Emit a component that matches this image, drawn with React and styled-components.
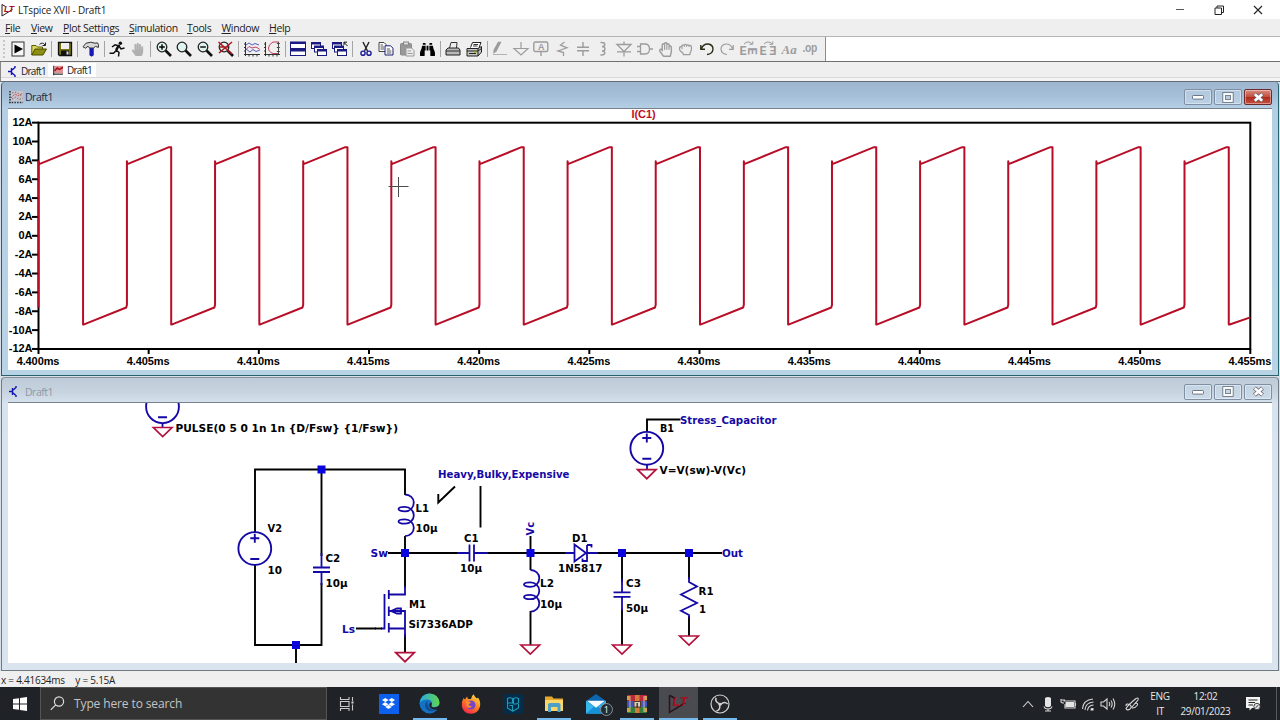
import React from "react";
import styled, { createGlobalStyle, css } from "styled-components";
import {
  FaBinoculars,
  FaDropbox,
  FaHandPaper,
  FaRegHandPaper,
  FaRegHandRock,
} from "react-icons/fa";

const INK = "#1509a6";
const TRACE = "#b80d26";
const GREY = "#9c9c9c";

/* ---------- toolbar icons, 16 x 16 ---------- */

const Lens = ({ children }) => (
  <>
    <path d="M9.5 9.5 L15 15" stroke="#111" strokeWidth="2.6" />
    <circle cx="6" cy="6" r="4.8" fill="#dff3f0" stroke="#222" strokeWidth="1.3" />
    {children}
  </>
);

const Axes = () => (
  <path
    d="M1.5 1V15M0 13.5H16M0 3H2M0 6.5H2M0 10H2M5 13V15.5M9 13V15.5M13 13V15.5"
    stroke="#333"
    fill="none"
    strokeWidth="1"
  />
);

const MiniWindow = ({ x, y, w = 9, h = 6 }) => (
  <>
    <rect x={x} y={y} width={w} height={h} fill="#fff" stroke="#1a1a80" />
    <rect x={x} y={y} width={w} height="2" fill="#1a1a80" />
  </>
);

const ICONS = {
  run: (
    <>
      <rect x="2" y="1" width="12" height="14" fill="#f6f6f6" stroke="#333" />
      <path d="M4.5 3.5L13 8L4.5 12.5Z" fill="#000" />
    </>
  ),
  open: (
    <>
      <path d="M.8 14V4.5H5L6.5 6H11.5V8" fill="#d8d860" stroke="#5a5a00" />
      <path d="M.8 14L4 8H15.5L12 14Z" fill="#8e8e12" stroke="#4c4c00" />
      <path d="M8.5 3.5Q11.5 .5 14 4M14.5 1.5V4.5H11.5" fill="none" stroke="#222" />
    </>
  ),
  save: (
    <>
      <path d="M1.5 1.5H14.5V14.5H2.5L1.5 13.5Z" fill="#74740a" stroke="#111" strokeWidth="1.3" />
      <rect x="4" y="2" width="8" height="6" fill="#efefef" />
      <rect x="4" y="9.5" width="8" height="5" fill="#111" />
      <rect x="9.5" y="10.5" width="2" height="3" fill="#ddd" />
    </>
  ),
  hammer: (
    <>
      <path d="M6.8 6.5H10.4V14.2Q8.6 16.2 6.8 14.2Z" fill="#1616c8" stroke="#10107c" strokeWidth=".6" />
      <path d="M0 5.8L3 2.2Q8 .2 12 2.2L14.5 1.8Q16 3.5 15.4 6.4L12.5 5.4L10.5 7H6.5L5 5.2L2.5 7.2Z" fill="#d8d8d8" stroke="#333" />
    </>
  ),
  runner: (
    <>
      <circle cx="11.4" cy="2.2" r="1.7" fill="#111" />
      <path d="M10.5 4.2L7.5 9.2L10 11.5L9.5 15.5M7.5 9.2L4.5 12.2H.5M3 6L6 3.8L10 5L12 8L15.5 7" fill="none" stroke="#111" strokeWidth="1.5" />
      <path d="M10 4L7 9" stroke="#111" strokeWidth="2.4" />
    </>
  ),
  zoomIn: (
    <Lens>
      <path d="M3.2 6H8.8M6 3.2V8.8" stroke="#000" strokeWidth="1.4" />
    </Lens>
  ),
  zoom: <Lens />,
  zoomOut: (
    <Lens>
      <path d="M3.2 6H8.8" stroke="#000" strokeWidth="1.4" />
    </Lens>
  ),
  zoomFit: (
    <Lens>
      <path d="M.5 1L14 13M14 1L1 12M1 6H10" stroke="#b01820" strokeWidth="1.6" />
    </Lens>
  ),
  traces: (
    <>
      <Axes />
      <path d="M2 4L5 2L8 4L11 2.5L15 4" fill="none" stroke="#555cb8" />
      <path d="M2 8.5L5 5.5L8 7L12 6L15.5 8" fill="none" stroke="#c04060" />
      <path d="M2 8L6 11L9 8.5L12 10.5L16 9" fill="none" stroke="#555cb8" />
    </>
  ),
  fitTrace: (
    <>
      <Axes />
      <path d="M15 1H9Q4.5 3.5 4.5 7Q4.5 11 9 12.5H14" fill="none" stroke="#c4405a" />
      <path d="M14.5 1V13M12.8 2.5H15.8M12.8 6.5H15.8M12.8 10.5H15.8" fill="none" stroke="#444" />
    </>
  ),
  tile: (
    <>
      <MiniWindow x={.5} y={1} w={15} h={6.5} />
      <MiniWindow x={.5} y={8.5} w={15} h={6} />
    </>
  ),
  cascade: (
    <>
      <MiniWindow x={.5} y={1.5} />
      <MiniWindow x={3.5} y={5} />
      <MiniWindow x={6.5} y={8.5} />
    </>
  ),
  closeAll: (
    <>
      <MiniWindow x={.5} y={1.5} />
      <MiniWindow x={2.5} y={5} />
      <MiniWindow x={5.5} y={8.5} />
      <path d="M15.5 5L12 1.5M12 4V1.2H15" fill="none" stroke="#111" />
    </>
  ),
  cut: (
    <>
      <path d="M5 1L9.5 10M11 1L6.5 10" stroke="#222" strokeWidth="1.4" />
      <circle cx="5" cy="12.2" r="2.1" fill="none" stroke="#1a1a98" strokeWidth="1.4" />
      <circle cx="11" cy="12.2" r="2.1" fill="none" stroke="#1a1a98" strokeWidth="1.4" />
    </>
  ),
  copy: (
    <>
      <path d="M1 1.5H6L8 3.5V10.5H1Z" fill="#fff" stroke="#444" />
      <path d="M2.5 4H5M2.5 6H6M2.5 8H6" stroke="#555" />
      <path d="M7 4.8H12.5L15 7.2V14H7Z" fill="#fff" stroke="#1c1c78" />
      <path d="M8.8 8H12M8.8 10H13.3M8.8 12H13.3" stroke="#555" />
    </>
  ),
  paste: (
    <>
      <rect x="1.5" y="2.5" width="11" height="11.5" rx="1" fill="#999" stroke="#888" />
      <rect x="4.5" y="1" width="5" height="3" fill="#ddd" stroke="#888" />
      <path d="M7 7H12.5L15 9.5V15H7Z" fill="#eee" stroke="#999" />
      <path d="M8.5 10H12M8.5 12.5H13.5" stroke="#999" />
    </>
  ),
  printer: (
    <>
      <path d="M4.5 7L6 1.5H12L11.5 7" fill="#eee" stroke="#333" />
      <path d="M3 7H13.5L15 9V14H1V9Z" fill="#b8b8b8" stroke="#222" />
      <path d="M1 10H15" stroke="#333" />
    </>
  ),
  printSetup: (
    <>
      <path d="M4.5 6.5L6.5 1.5H15L13 6.5" fill="#fff" stroke="#222" />
      <path d="M7.5 3.5H12M7 5H11.5" stroke="#333" />
      <path d="M1 7.5H12L15.5 5.5V11L12 15H1Z" fill="#c8c8c4" stroke="#222" />
      <path d="M1 10H12V15M12 7.5V10M12 10L15.5 7.5M3 12.5H10" fill="none" stroke="#222" />
      <path d="M8 11.3H11" stroke="#b7b72a" />
    </>
  ),
  pencil: (
    <>
      <path d="M6 .8H9.5L4.5 10.5L1.2 13L1.6 8.8Z" fill={GREY} />
      <path d="M1 13.5H15" stroke="#b4b4b4" />
    </>
  ),
  ground: <path d="M8 1V7.5M1 7.5H15L8 14Z" fill="none" stroke={GREY} strokeWidth="1.2" />,
  label: (
    <>
      <rect x=".8" y="1" width="14" height="9.5" rx="1.5" fill="none" stroke={GREY} strokeWidth="1.4" />
      <path d="M8 10.5V15" stroke={GREY} strokeWidth="1.4" />
      <text x="8" y="9" textAnchor="middle" fill={GREY} fontSize="9" fontWeight="700" fontFamily="Liberation Sans">A</text>
    </>
  ),
  resistor: <path d="M10.5 1L6.5 4L13 6.8L4 10L9.5 11.5V15" fill="none" stroke={GREY} strokeWidth="1.3" />,
  capacitor: <path d="M8 1V6.3M2 6.3H14M2 9.8H14M8 9.8V15" fill="none" stroke={GREY} strokeWidth="1.4" />,
  inductor: <path d="M5.5 1.5C11 1 11 5.5 7 5.5C11 5.5 11 10 7 10C11 10 11 14.5 5.5 14" fill="none" stroke={GREY} strokeWidth="1.4" />,
  diode: <path d="M8 .5V3.5M1 3.5H15L8 10.5ZM1 10.8H15M8 11V15.5" fill="none" stroke={GREY} strokeWidth="1.3" />,
  gate: <path d="M3.5 3H8Q12.5 3 12.5 8Q12.5 13 8 13H3.5ZM0 5.5H3.5M0 10.5H3.5M12.5 8H16" fill="none" stroke={GREY} strokeWidth="1.3" />,
  undo: <path d="M2.5 7.5Q4.5 2.8 9 3Q14 3.6 14 8.2Q13.6 12.8 8 13.5M1.8 4V8.3H6" fill="none" stroke="#2c2c14" strokeWidth="1.4" />,
  redo: <path d="M13.5 7.5Q11.5 2.8 7 3Q2 3.6 2 8.2Q2.4 12.8 8 13.5M14.2 4V8.3H10" fill="none" stroke={GREY} strokeWidth="1.2" />,
  rotate: (
    <>
      <text x="-.5" y="14" fill={GREY} fontSize="12" fontWeight="700" fontFamily="Liberation Mono">E</text>
      <text transform="translate(8 6.5) rotate(90)" x="0" y="0" fill={GREY} fontSize="12.5" fontWeight="700" fontFamily="Liberation Mono">E</text>
      <path d="M4 3Q8 -1 12 2.8M12.8 .3V3.3H9.5" fill="none" stroke={GREY} />
    </>
  ),
  mirror: (
    <>
      <text x="-.5" y="14" fill={GREY} fontSize="12" fontWeight="700" fontFamily="Liberation Mono">E</text>
      <text transform="translate(16.5 14) scale(-1 1)" fill={GREY} fontSize="12" fontWeight="700" fontFamily="Liberation Mono">E</text>
      <path d="M4 3Q8 -1 12 2.8M12.8 .3V3.3H9.5" fill="none" stroke={GREY} />
    </>
  ),
  text: <text x=".5" y="12.5" textLength="15" fill={GREY} fontSize="13" fontWeight="700" fontStyle="italic" fontFamily="Liberation Serif">Aa</text>,
  op: <text x=".5" y="11" textLength="14.5" lengthAdjust="spacingAndGlyphs" fill={GREY} fontSize="12" fontWeight="700" fontFamily="Liberation Sans">.op</text>,
};

const FONT_ICONS = {
  halt: <FaHandPaper size={13} color="#b0b0b0" />,
  find: <FaBinoculars size={15} color="#000" />,
  move: <FaRegHandPaper size={15} color={GREY} />,
  drag: <FaRegHandRock size={13} color={GREY} />,
};

const TOOLBAR = [
  ["run", "open"],
  ["save"],
  ["hammer"],
  ["runner", "halt"],
  ["zoomIn", "zoom", "zoomOut", "zoomFit"],
  ["traces", "fitTrace"],
  ["tile", "cascade", "closeAll"],
  ["cut", "copy", "paste", "find"],
  ["printer", "printSetup"],
  [
    "pencil", "ground", "label", "resistor", "capacitor", "inductor", "diode", "gate",
    "move", "drag", "undo", "redo", "rotate", "mirror", "text", "op",
  ],
];

const ToolIcon = ({ name }) => (
  <ToolButton>
    {FONT_ICONS[name] || (
      <svg width="16" height="16" viewBox="0 0 16 16" overflow="visible">
        {ICONS[name]}
      </svg>
    )}
  </ToolButton>
);

const Toolbar = () => (
  <ToolbarRow>
    <Tools>
      <Grip />
      {TOOLBAR.map((group, i) => (
        <React.Fragment key={i}>
          {i > 0 && <Separator />}
          {group.map((name) => (
            <ToolIcon key={name} name={name} />
          ))}
        </React.Fragment>
      ))}
    </Tools>
  </ToolbarRow>
);

/* ---------- logos ---------- */

const LtLogo = ({ size = 14 }) => (
  <svg width={size} height={size} viewBox="0 0 14 14" overflow="visible">
    <path d="M1 1.5V13L11.5 6.5M1 1.5L4.5 3.5" fill="none" stroke="#2a1418" strokeWidth="1" />
    <text x="3" y="8.6" textLength="10" lengthAdjust="spacingAndGlyphs" fontSize="9" letterSpacing="0" fontWeight="700" fontStyle="italic" fill="#a80d22" fontFamily="Liberation Sans">LT</text>
  </svg>
);

const SchematicIcon = () => (
  <svg width="9" height="11" viewBox="0 0 9 11">
    <path d="M0 5.5H3M3.5 2V9M3.5 4.5L7 1.5V0M3.5 6.5L7 9.5V11" fill="none" stroke="#1414b4" strokeWidth="1.4" />
  </svg>
);

const PlotIcon = ({ faded }) => (
  <svg width={faded ? 14 : 10} height={faded ? 13 : 11} viewBox="0 0 14 13">
    <rect x="2" y="0" width="12" height="10" fill={faded ? "#c9c4cc" : "#e09090"} />
    <path d="M1 0V13M0 11.5H14" stroke="#333" strokeWidth="1.6" strokeDasharray={faded ? "1.5 1.2" : "none"} />
    <path d="M2 7L6 3L9 5L14 2" fill="none" stroke={faded ? "#c4534f" : "#a81020"} strokeWidth={faded ? 1 : 2.2} strokeDasharray={faded ? "2 1" : "none"} />
    {faded && <path d="M3 2L6 1L9 2.5L13 5M3 8L7 6L10 8.5L14 7" fill="none" stroke="#7b6a72" strokeDasharray="1.5 1.5" />}
  </svg>
);

/* ---------- waveform ---------- */

const PLOT = { left: 38.5, right: 1250.3, top: 122.7, bottom: 349 };
const usToX = (us) => PLOT.left + 0.3 + (us * (PLOT.right - PLOT.left)) / 55;
const ampToY = (a) => 235.8 - a * 9.43;

const wavePath = () => {
  let d = `M${PLOT.left} ${ampToY(-7.6)}`;
  for (let us = 0; us < 55; us += 4) {
    const up = usToX(us);
    const down = usToX(us + 2);
    d += `V${ampToY(7.9)}L${up + 0.4} ${ampToY(7.6)}`;
    d += `L${down - 2} ${ampToY(9.4)}L${down + 0.2} ${ampToY(9.4)}V${ampToY(-9.4)}h1`;
    const next = us + 4;
    if (next > 55) {
      d += `L${PLOT.right} ${ampToY(-8.65)}`;
    } else {
      d += `L${usToX(next) - 0.7} ${ampToY(-7.6)}L${usToX(next)} ${ampToY(-7.3)}`;
    }
  }
  return d;
};

const AMPS = [12, 10, 8, 6, 4, 2, 0, -2, -4, -6, -8, -10, -12];
const TIMES = [0, 5, 10, 15, 20, 25, 30, 35, 40, 45, 50, 55];

const Waveform = () => (
  <Canvas viewBox="8 109 1264 261" height="261">
    <AxisText x="643.5" y="118" textAnchor="middle" fill="#bd1027">I(C1)</AxisText>
    <rect x={PLOT.left} y={PLOT.top} width={PLOT.right - PLOT.left} height={PLOT.bottom - PLOT.top} fill="none" stroke="#000" strokeWidth="2" />
    {AMPS.map((a) => (
      <g key={a}>
        <path d={`M32 ${ampToY(a)}H39`} stroke="#000" strokeWidth="2" />
        <AxisText x="32.3" y={ampToY(a) + 3.5} textAnchor="end">{a}A</AxisText>
      </g>
    ))}
    {TIMES.map((t) => (
      <g key={t}>
        <path d={`M${usToX(t) - 0.3} 349V354`} stroke="#000" strokeWidth="2" />
        <AxisText x={usToX(t) - 0.8} y="364.5" textAnchor="middle">{(4.4 + t / 1000).toFixed(3)}ms</AxisText>
      </g>
    ))}
    <path d={wavePath()} fill="none" stroke={TRACE} strokeWidth="2" strokeLinejoin="round" />
    <path d="M388.5 186.5H408.5M398.5 177V197" stroke="#4c4c4c" strokeWidth="1" />
  </Canvas>
);

/* ---------- schematic ---------- */

const Ground = ({ x, y }) => (
  <path d={`M${x - 9.3} ${y}H${x + 9.3}L${x} ${y + 9}Z`} fill="#fff" stroke="#b3123d" strokeWidth="1.7" />
);

const Source = ({ x, y }) => (
  <g stroke={INK} strokeWidth="1.9" fill="none">
    <circle cx={x} cy={y} r="16.4" />
    <path d={`M${x - 4.5} ${y - 10.3}h9M${x} ${y - 14.8}v9M${x - 4.5} ${y + 10.5}h9`} />
  </g>
);

const Coil = ({ x, y }) => (
  <path
    transform={`translate(${x} ${y})`}
    d="M0 0C5 0 8.8 3.5 8.8 8C8.8 13 5 16.8 0 16.8C-4 16.8-6.5 16-6.5 14.6C-6.5 13-4 12.4 0 12.4C5 12.4 8.8 16.3 8.8 20.7C8.8 25.5 5 29.2 0 29.2C-4 29.2-6.5 28.4-6.5 27C-6.5 25.4-4 24.8 0 24.8C5 24.8 8.8 29 8.8 33.3C8.8 37.8 5 41.7 0 41.7"
    fill="none"
    stroke={INK}
    strokeWidth="1.8"
  />
);

const LABELS = [
  ["PULSE(0 5 0 1n 1n {D/Fsw} {1/Fsw})", 175.5, 432, 222.5],
  ["V2", 267.5, 532, 14.5],
  ["10", 267.5, 574, 14.5],
  ["C2", 325.5, 561.5, 14.8],
  ["10µ", 325.5, 587, 22],
  ["L1", 415.5, 511.5, 13.5],
  ["10µ", 415.5, 532, 22],
  ["C1", 464, 541.5, 14.5],
  ["10µ", 460, 572, 22],
  ["L2", 540, 587, 14],
  ["10µ", 540, 607.5, 22],
  ["D1", 572, 541.5, 15.5],
  ["1N5817", 558, 572, 44.5],
  ["C3", 626, 587, 15],
  ["50µ", 626, 611.5, 22],
  ["R1", 698.5, 594.5, 15],
  ["1", 699, 613, 7],
  ["M1", 409, 607.5, 17],
  ["Si7336ADP", 408.5, 628, 64.5],
  ["B1", 660, 432, 14],
  ["V=V(sw)-V(Vc)", 659.5, 474, 86.5],
  ["Sw", 370.5, 557, 17.5, INK],
  ["Ls", 342, 632.5, 13, INK],
  ["Out", 722, 557, 21, INK],
  ["Stress_Capacitor", 680, 424, 96.5, INK],
  ["Heavy,Bulky,Expensive", 438, 478, 131.5, INK],
];

const NODES = [
  [321.5, 469.5],
  [296, 645],
  [405, 553],
  [530.5, 553],
  [622, 553],
  [689, 553],
];

const Schematic = () => (
  <Canvas viewBox="8 403 1264 260" height="260">
    <path
      d="M255 532V469.5H405V495M255 565V645H321.5V583M321.5 469.5V556M296 645V663M388 553H460M485 553H566M595 553H722M405 536V588M405 634V652M356 628.5H376M530.5 536V570M530.5 611V645M622 553V582M622 609V645M689 553V579M689 616V636M647 432V419.5H680.5M455 486.5L438.3 502.5V494M480.5 486V527.5"
      fill="none"
      stroke="#000"
      strokeWidth="1.9"
    />
    <path
      d="M321.5 553V567.5M313 567.5H330M313 572H330M321.5 572V585M457 553H469.5M469.5 544.5V561.5M474 544.5V561.5M474 553H488M622 579V592.3M613.5 592.3H630.5M613.5 596.8H630.5M622 596.8V611M689 577V582L697 586.5L681 594.5L697 603L681 610.8L689 615V618M565 553H574M574.5 544.5V561.5L586 553ZM587 545V561H582.5V558.5M587 545H591.5V547.5M587 553H598M384.5 594V628.5H381M388.8 590V599M388.8 606.5V616M388.8 623V632.5M388.8 594.5H405V586M388.8 611H405V637M388.8 628.5H405M391 611L397 608.5H401V613.5H397ZM162.5 423V428M647 464V470"
      fill="none"
      stroke={INK}
      strokeWidth="1.8"
    />
    <path d="M375 628.5H382" stroke="#000" strokeWidth="1.9" />
    <Source x={162.5} y={406.7} />
    <Source x={254.8} y={548.5} />
    <Source x={646.8} y={448.3} />
    <Coil x={405} y={494.5} />
    <Coil x={530.5} y={570} />
    <Ground x={162.7} y={427.5} />
    <Ground x={405} y={652.7} />
    <Ground x={530.3} y={645} />
    <Ground x={622} y={645} />
    <Ground x={689} y={636} />
    <Ground x={646.8} y={469.7} />
    {NODES.map(([x, y]) => (
      <rect key={x} x={x - 4} y={y - 4} width="8" height="8" fill="#0a05dc" />
    ))}
    {LABELS.map(([label, x, y, width, fill]) => (
      <PartText key={`${label}${x}`} x={x} y={y} textLength={width} lengthAdjust="spacingAndGlyphs" fill={fill || "#000"}>
        {label}
      </PartText>
    ))}
    <PartText transform="translate(534 535.5) rotate(-90)" textLength="13.5" lengthAdjust="spacingAndGlyphs" fill={INK}>Vc</PartText>
  </Canvas>
);

/* ---------- windows ---------- */

const ChildWindow = ({ active, icon, children }) => (
  <WindowFrame $active={active}>
    <WindowTitle $active={active}>
      <WindowIcon>{icon}</WindowIcon>
      <WindowName $active={active}>Draft1</WindowName>
      <WindowButton>
        <svg width="14" height="8" viewBox="0 0 14 8">
          <rect x="1.5" y="2.5" width="11" height="3.6" rx=".8" fill="#fff" stroke="#6d7783" strokeWidth="1" />
        </svg>
      </WindowButton>
      <WindowButton>
        <svg width="12" height="11" viewBox="0 0 12 11">
          <rect x="2.2" y="2" width="7.6" height="7" fill="none" stroke="#66707c" strokeWidth="3.6" />
          <rect x="2.2" y="2" width="7.6" height="7" fill="none" stroke="#fff" strokeWidth="1.9" />
        </svg>
      </WindowButton>
      <WindowButton $close={active}>
        <svg width="13" height="11" viewBox="0 0 13 11">
          <path d="M2.5 2L10.5 9M10.5 2L2.5 9" stroke="#66606a" strokeWidth="4.2" />
          <path d="M2.8 2.2L10.2 8.8M10.2 2.2L2.8 8.8" stroke="#fff" strokeWidth="2.7" />
        </svg>
      </WindowButton>
    </WindowTitle>
    <WindowBody>{children}</WindowBody>
  </WindowFrame>
);

const MENU = [
  ["File", 26],
  ["View", 32],
  ["Plot Settings", 66],
  ["Simulation", 58],
  ["Tools", 34.5],
  ["Window", 47.5],
  ["Help", 30],
];

/* ---------- taskbar ---------- */

const EdgeLogo = () => (
  <svg width="21" height="21" viewBox="0 0 21 21">
    <defs>
      <linearGradient id="edgeTop" x1="0" x2="1">
        <stop offset="0" stopColor="#25a8e0" />
        <stop offset="1" stopColor="#62d64c" />
      </linearGradient>
    </defs>
    <circle cx="10.5" cy="10.5" r="10" fill="#1272c4" />
    <path d="M.6 10Q2 .8 10.5 .5Q19.5 1 20.5 9.5Q20.3 14.3 14.5 14Q11.5 13.6 13 11.5Q13.6 7 8.5 6.5Q3 6.4 .6 10Z" fill="url(#edgeTop)" />
    <path d="M8.5 8Q4.5 11.5 7 15.5Q10.5 20.5 18 16.5Q13 18.5 10 14.8Q7.5 11.5 8.5 8Z" fill="#174a91" />
    <path d="M12.5 12Q11.5 14.2 15 14.6Q18 14.5 19.8 12.5L20.5 16L18.5 16.5Q13 17.5 10.5 13.5Q9.5 11 12 9.5Q13.5 10.5 12.5 12Z" fill="#1f2226" />
  </svg>
);

const FirefoxLogo = () => (
  <svg width="20" height="20" viewBox="0 0 20 20">
    <defs>
      <linearGradient id="fox" x1=".8" y1="0" x2=".2" y2="1">
        <stop offset="0" stopColor="#ffdf3a" />
        <stop offset=".5" stopColor="#ff7a24" />
        <stop offset="1" stopColor="#f5204f" />
      </linearGradient>
    </defs>
    <path d="M2.5 4L4 5.5L6 2.5L7 5H10Q10.5 2 12.5 .3Q14 3.5 16 4.5L17 3.5Q20 8 19 12.5Q17 19.5 10 19.8Q2 19.5 .8 12Q.5 7.5 2.5 4Z" fill="url(#fox)" />
    <circle cx="10" cy="11" r="4.5" fill="#7445c7" />
    <path d="M5 7.5Q8 6.5 10 8.5L7.5 10.5Q8 12.5 11 12.3Q8 15.5 5.5 12.5Z" fill="#ff8a2a" />
  </svg>
);

const FootballLogo = () => (
  <svg width="20" height="20" viewBox="0 0 20 20">
    <rect width="20" height="20" fill="#062c48" />
    <path d="M4.5 4.5Q7 3 9.5 4.5V9H4.5ZM10.5 4.5Q13 3 15.5 4.5V9L13 10H10.5ZM4.5 9.5V14L9.5 17V11.5H6.5M15.5 10V14L10 17" fill="none" stroke="#1b9ebd" strokeWidth="1.1" />
  </svg>
);

const FolderLogo = () => (
  <svg width="20" height="18" viewBox="0 0 20 18">
    <path d="M1 1.5H8L9.5 3.5H19V16H1Z" fill="#e6a92e" />
    <path d="M1 5H19V16H1Z" fill="#fbd669" />
    <path d="M4 17V9.5Q4 8 6 8H14.5Q16.5 8 16.5 9.5V17H13.5V12H7V17Z" fill="#4ba0c8" />
  </svg>
);

const MailLogo = () => (
  <MailWrap>
    <svg width="20" height="20" viewBox="0 0 20 20">
      <path d="M0 7L10 0L20 7V19.5H0Z" fill="#0c65ad" />
      <path d="M0 6.5L10 14L20 6.5V19.5H0Z" fill="#37b8ed" />
      <path d="M0 19.5L10 11L20 19.5Z" fill="#1591d5" />
      <path d="M1 6.8H19L10 13.7Z" fill="#f2fbff" />
    </svg>
    <Badge>1</Badge>
  </MailWrap>
);

const RarLogo = () => (
  <svg width="20" height="18" viewBox="0 0 20 18">
    <rect y="0" width="20" height="6" rx="1" fill="#b92b3a" />
    <rect y="6" width="20" height="6" rx="1" fill="#4655bb" />
    <rect y="12" width="20" height="6" rx="1" fill="#347f39" />
    <path d="M0 1H2.5V5H0ZM17.5 1H20V5H17.5ZM0 13H2.5V17H0ZM17.5 13H20V17H17.5Z" fill="#d3a34c" />
    <path d="M3 1V17M17 1V17" stroke="#e6d2a0" strokeWidth=".8" />
    <rect x="8" width="4.5" height="18" fill="#d27b3b" />
    <rect x="7" y="6.5" width="6.5" height="5.5" fill="#d8d0bf" stroke="#513a2d" />
    <path d="M10.2 8V13" stroke="#533" strokeWidth="1.5" />
  </svg>
);

const ObsLogo = () => (
  <svg width="20" height="20" viewBox="0 0 20 20">
    <circle cx="10" cy="10" r="9" fill="#24252a" stroke="#d0d0d0" strokeWidth="1.2" />
    <g fill="none" stroke="#d0d0d0" strokeWidth="1.5">
      <path d="M6 3.8Q4.8 8.2 9.6 9.6" />
      <path d="M6 3.8Q4.8 8.2 9.6 9.6" transform="rotate(120 10 10.3)" />
      <path d="M6 3.8Q4.8 8.2 9.6 9.6" transform="rotate(240 10 10.3)" />
    </g>
    <circle cx="10" cy="10.3" r="1.6" fill="#d0d0d0" />
  </svg>
);

const TaskViewIcon = () => (
  <svg width="16" height="16" viewBox="0 0 16 16">
    <path d="M1.5 1V3.5H10V1M1.5 15V12.5H10V15M1.5 5.5H10V10.5H1.5ZM13.5 1V5M13.5 8.5V14.5" fill="none" stroke="#c8c8c8" strokeWidth="1.1" />
    <rect x="12.5" y="5.5" width="2" height="2" fill="#ddd" />
  </svg>
);

const DropboxTile = () => (
  <BlueTile>
    <FaDropbox size={13} color="#fff" />
  </BlueTile>
);

const TASKS = [
  { icon: <TaskViewIcon /> },
  { icon: <DropboxTile /> },
  { icon: <EdgeLogo />, open: true },
  { icon: <FirefoxLogo /> },
  { icon: <FootballLogo /> },
  { icon: <FolderLogo />, open: true },
  { icon: <MailLogo /> },
  { icon: <RarLogo />, open: true },
  { icon: <LtLogo size={21} />, open: true, current: true },
  { icon: <ObsLogo />, open: true },
];

const TRAY = [
  { w: 20, d: "M3 11L8 5.5L13 11" },
  { w: 19, d: "M4 10.5Q4.5 13 8 13Q11.5 13 12 10.5M8 13V15M5 15H11", fill: "M5 2Q8 0 11 2V10Q8 12.5 5 10Z" },
  { w: 21, d: "M3.5 5H15V12H5V8M1 3V5.5Q1 7 4 7M.5 4H5M16 7V10", fill: "M5.5 6H14V11H5.5Z" },
  { w: 20, d: "M2.5 13Q3 4 13 3M5 14Q5.5 6.5 13.5 6M7.5 14.5Q8 9.5 13.5 9", fill: "M10.5 14.5L10.8 12.2L13.5 12V14.5Z" },
  { w: 20, d: "M1 6H3.5L7 3V13L3.5 10H1ZM9 6Q10.5 8 9 10M11 4.5Q13.3 8 11 11.5M13 2.5Q16.5 8 13 13.5" },
  { w: 28, d: "M2 10Q2 7 5.5 8.5Q8.5 10.5 6 13Q3 15 2 12.5Q4 9 12 2.5Q15 1 14 4L7.5 11.5M10 8Q14 6 13.5 9Q11 12.5 8 12" },
];

const Taskbar = () => (
  <TaskbarRow>
    <Start>
      <svg width="14" height="14" viewBox="0 0 14 14">
        <path d="M0 2L6 1.2V6.5H0ZM7 1L14 0V6.5H7ZM0 7.5H6V12.8L0 12ZM7 7.5H14V14L7 13Z" fill="#fff" />
      </svg>
    </Start>
    <Search>
      <svg width="15" height="15" viewBox="0 0 15 15">
        <circle cx="9" cy="5.5" r="4.6" fill="none" stroke="#ddd" strokeWidth="1.2" />
        <path d="M5.7 8.8L.8 13.8" stroke="#ddd" strokeWidth="1.2" />
      </svg>
      <SearchText>Type here to search</SearchText>
    </Search>
    {TASKS.map((task, i) => (
      <Task key={i} $open={task.open} $current={task.current}>
        {task.icon}
      </Task>
    ))}
    <Tray>
      {TRAY.map((item, i) => (
        <TrayIcon key={i} $width={item.w}>
          <svg width="16" height="16" viewBox="0 0 16 16">
            <path d={item.d} fill="none" stroke="#d6d6d6" strokeWidth="1.1" />
            {item.fill && <path d={item.fill} fill="#e4e4e4" />}
          </svg>
        </TrayIcon>
      ))}
      <TrayText $width={28}>
        <span>ENG</span>
        <span>IT</span>
      </TrayText>
      <TrayText $width={63}>
        <span>12:02</span>
        <span>29/01/2023</span>
      </TrayText>
      <Notifications>
        <svg width="15" height="15" viewBox="0 0 15 15">
          <path d="M0 1H14V12H6L3.5 14.5V12H0Z" fill="#f4f4f4" />
          <path d="M2.5 4H11.5M2.5 6.5H9M2.5 9H7" stroke="#222" />
          <circle cx="11" cy="10.5" r="3.2" fill="#ddd" stroke="#333" strokeWidth=".9" />
          <path d="M9.5 11.8L12.5 9" stroke="#333" />
        </svg>
      </Notifications>
    </Tray>
  </TaskbarRow>
);

export default function App() {
  return (
    <Screen>
      <GlobalStyle />
      <TitleBar>
        <LtLogo />
        <TitleText>LTspice XVII - Draft1</TitleText>
        <Controls width="90" height="12" viewBox="0 0 90 12">
          <path d="M1 5.5H9" stroke="#555" />
          <path d="M40 4H46.5V10.5H40ZM42 4V2H48.5V8.5H46.5" fill="none" stroke="#222" />
          <path d="M79 2L87 10M87 2L79 10" stroke="#222" strokeWidth="1.1" />
        </Controls>
      </TitleBar>
      <MenuBar>
        {MENU.map(([name, width]) => (
          <MenuItem key={name} $width={width}>
            <u>{name[0]}</u>
            {name.slice(1)}
          </MenuItem>
        ))}
      </MenuBar>
      <Toolbar />
      <Tabs>
        <Tab>
          <SchematicIcon />
          Draft1
        </Tab>
        <Tab $active>
          <PlotIcon />
          Draft1
        </Tab>
      </Tabs>
      <Workspace>
        <ChildWindow active icon={<PlotIcon faded />}>
          <Waveform />
        </ChildWindow>
        <ChildWindow icon={<SchematicIcon />}>
          <Schematic />
        </ChildWindow>
      </Workspace>
      <StatusBar>
        <span>x = 4.41634ms</span>
        <span>y = 5.15A</span>
      </StatusBar>
      <Taskbar />
    </Screen>
  );
}

const GlobalStyle = createGlobalStyle`
  * {
    box-sizing: border-box;
  }
  body {
    margin: 0;
    overflow: hidden;
  }
`;
const Screen = styled.div`
  display: flex;
  flex-direction: column;
  width: 1280px;
  height: 720px;
  background: #efefef;
  font-family: "Open Sans", "Noto Sans", sans-serif;
  font-size: 10.5px;
  letter-spacing: -0.35px;
  color: #222;
  white-space: nowrap;

  svg {
    display: block;
    flex-shrink: 0;
  }
`;
const TitleBar = styled.div`
  display: flex;
  align-items: center;
  height: 19px;
  padding: 0 15px 0 1px;
  background: #fff;
`;
const TitleText = styled.span`
  margin-left: 3px;
  font-size: 10px;
  letter-spacing: -0.2px;
`;
const Controls = styled.svg`
  margin-left: auto;
`;
const MenuBar = styled.div`
  display: flex;
  align-items: center;
  height: 18px;
  padding-left: 5px;
  border-bottom: 1px solid #b5b5b5;
`;
const MenuItem = styled.span`
  width: ${(props) => props.$width}px;
  u {
    text-underline-offset: 1px;
  }
`;
const ToolbarRow = styled.div`
  height: 25px;
  background: #fff;
  border-bottom: 1px solid #707070;
`;
const Tools = styled.div`
  display: flex;
  align-items: center;
  width: 826px;
  height: 24px;
  background: #efefef;
  border-right: 1px solid #8c8c8c;
`;
const Grip = styled.div`
  width: 2px;
  height: 18px;
  margin: 0 3px 0 3px;
  border-left: 2px dotted #c8c8c8;
`;
const ToolButton = styled.div`
  display: flex;
  align-items: center;
  justify-content: center;
  flex-shrink: 0;
  width: 20.65px;
  height: 20px;
`;
const Separator = styled.div`
  flex-shrink: 0;
  width: 1px;
  height: 16px;
  margin: 0 2.2px;
  background: #a5a5a5;
`;
const Tabs = styled.div`
  display: flex;
  height: 20px;
  padding: 1px 0 0 1px;
  border-left: 1px solid #888;
  border-bottom: 1px solid #626d78;
  background: linear-gradient(#efefef 15px, #d8d8d8 15px, #d8d8d8 16px, #f4f4f4 16px);
`;
const Tab = styled.div`
  display: flex;
  align-items: center;
  gap: 4px;
  height: ${(props) => (props.$active ? 14 : 16)}px;
  width: ${(props) => (props.$active ? 48 : 46)}px;
  padding-left: ${(props) => (props.$active ? 5 : 6)}px;
  font-size: 10px;
  letter-spacing: -0.75px;
  background: ${(props) => (props.$active ? "#fff" : "transparent")};
`;
const Workspace = styled.div`
  display: flex;
  flex-direction: column;
  gap: 1px;
  height: 589px;
  padding: 0 1px;
  background: #d8dfe6;
`;
const WindowFrame = styled.div`
  display: flex;
  flex-direction: column;
  height: 294px;
  padding: 0 6px ${(props) => (props.$active ? 5 : 7)}px;
  border: 1px solid ${(props) => (props.$active ? "#28636c" : "#6f7a84")};
  border-top: ${(props) => (props.$active ? "none" : "1px solid #87919b")};
  border-radius: 4px 4px 0 0;
  background: ${(props) =>
    props.$active
      ? "linear-gradient(#9db5cf, #a6bfd8 14px, #b4cfe5 26px, #b9d3e6)"
      : "linear-gradient(#bdcad7, #c7d4e0 14px, #d7e3ee 26px, #d9e4ef)"};
`;
const WindowTitle = styled.div`
  display: flex;
  align-items: center;
  gap: 2px;
  height: ${(props) => (props.$active ? 26 : 24)}px;
  padding: ${(props) => (props.$active ? 4 : 3)}px 0 0 1px;
  flex-shrink: 0;
`;
const WindowIcon = styled.div`
  width: 14px;
`;
const WindowName = styled.span`
  margin-right: auto;
  font-size: 10.5px;
  letter-spacing: -0.5px;
  color: ${(props) => (props.$active ? "#1c2b3c" : "#8b97a5")};
`;
const WindowButton = styled.div`
  display: flex;
  align-items: center;
  justify-content: center;
  width: 28px;
  height: 16px;
  border: 1px solid #7f8fa3;
  border-radius: 2px;
  background: rgba(200, 218, 236, 0.45);
  box-shadow: inset 0 0 0 1px rgba(255, 255, 255, 0.4);
  ${(props) =>
    props.$close &&
    css`
      border-color: #6b2a2a;
      background: linear-gradient(#d98c80, #c3503f 48%, #ad2a1c 50%, #c8503c);
    `}
`;
const WindowBody = styled.div`
  flex: 1;
  min-height: 0;
  border-top: 1px solid #77818c;
  background: #fff;
  overflow: hidden;
`;
const Canvas = styled.svg`
  width: 1264px;
`;
const AxisText = styled.text`
  font: 700 11px "Liberation Sans", Arial, sans-serif;
  letter-spacing: -0.1px;
`;
const PartText = styled.text`
  font: 700 10.8px "DejaVu Sans", Verdana, sans-serif;
  letter-spacing: 0;
`;
const StatusBar = styled.div`
  display: flex;
  align-items: center;
  gap: 10.5px;
  height: 16px;
  padding: 2px 0 0 1px;
  font-size: 10px;
  letter-spacing: -0.25px;
`;
const TaskbarRow = styled.div`
  display: flex;
  height: 33px;
  background: #1f2226;
`;
const Start = styled.div`
  display: flex;
  align-items: center;
  width: 40px;
  padding-left: 13px;
`;
const Search = styled.div`
  display: flex;
  align-items: center;
  gap: 9px;
  width: 286.5px;
  padding-left: 9px;
  border: 1px solid #555;
  background: #333;
`;
const SearchText = styled.span`
  font-size: 12px;
  color: #c4c4c4;
  letter-spacing: -0.12px;
`;
const Task = styled.div`
  display: flex;
  align-items: center;
  justify-content: center;
  width: 41.4px;
  flex-shrink: 0;
  background: ${(props) =>
    props.$current
      ? "linear-gradient(#76b9ed, #76b9ed) bottom / 39px 2px no-repeat, linear-gradient(#4a4b50, #4a4b50) center / 39px 100% no-repeat"
      : props.$open
        ? "linear-gradient(#76b9ed, #76b9ed) bottom / 34px 2px no-repeat"
        : "none"};
`;
const BlueTile = styled.div`
  display: flex;
  align-items: center;
  justify-content: center;
  width: 20px;
  height: 20px;
  background: #0d60ee;
`;
const MailWrap = styled.div`
  position: relative;
`;
const Badge = styled.span`
  position: absolute;
  left: 14px;
  top: 9px;
  width: 13px;
  height: 13px;
  border: 1px solid #8a8d90;
  border-radius: 50%;
  background: #222d35;
  color: #fff;
  font-size: 9px;
  line-height: 11px;
  text-align: center;
`;
const Tray = styled.div`
  display: flex;
  align-items: center;
  margin-left: auto;
  padding-right: 3px;
`;
const TrayIcon = styled.div`
  display: flex;
  justify-content: center;
  width: ${(props) => props.$width}px;
`;
const TrayText = styled.div`
  display: flex;
  flex-direction: column;
  align-items: center;
  width: ${(props) => props.$width}px;
  font-size: 10px;
  line-height: 15px;
  letter-spacing: -0.3px;
  color: #e8e8e8;
`;
const Notifications = styled.div`
  display: flex;
  width: 40px;
  height: 33px;
  align-items: center;
  padding-left: 9px;
  border-right: 1px solid #565b60;
`;
